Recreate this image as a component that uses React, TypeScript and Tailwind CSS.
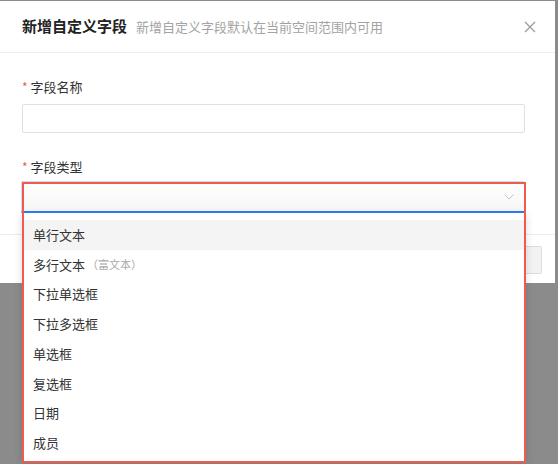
import React from 'react';

const options = ['单行文本', '多行文本', '下拉单选框', '下拉多选框', '单选框', '复选框', '日期', '成员'];

const Label: React.FC<{ text: string }> = ({ text }) => (
  <div className="flex items-center h-5 text-[13px] text-[#333]">
    <span className="text-[#f25a4e] mr-[3px] text-[12px] leading-none">*</span>
    {text}
  </div>
);

const App: React.FC = () => {
  return (
    <div
      className="relative w-[558px] h-[464px] overflow-hidden bg-[#8b8b8b]"
      style={{ fontFamily: '"Noto Sans CJK SC", "Noto Sans", sans-serif' }}
    >
      {/* Modal */}
      <div className="absolute left-0 top-px w-[555px] h-[282px] bg-white flex flex-col">
        {/* Header */}
        <div className="h-[52px] shrink-0 flex items-center pl-[22px] pr-[18px] border-b border-[#ededed]">
          <span className="text-[15px] font-bold text-[#222]">新增自定义字段</span>
          <span className="ml-[9px] text-[13px] text-[#a3a3a3]">新增自定义字段默认在当前空间范围内可用</span>
          <svg className="ml-auto mr-[1px]" width="12" height="12" viewBox="0 0 12 12">
            <path d="M1 1 L11 11 M11 1 L1 11" stroke="#9a9a9a" strokeWidth="1.2" fill="none" />
          </svg>
        </div>

        {/* Body */}
        <div className="pl-[22px] pr-[30px] pt-[24px]">
          <Label text="字段名称" />
          <div className="mt-[7px] h-[29px] border border-[#e0e0e0] rounded-[2px] bg-white" />
          <div className="mt-[24px]">
            <Label text="字段类型" />
          </div>
          <div className="mt-[4px] -ml-px h-[32px] border border-[#c9dbf8] border-b-2 border-b-[#2e7cf6] rounded-t-[2px] bg-gradient-to-b from-white to-[#f6f6f6] flex items-center justify-end pr-[10px]">
            <svg width="10" height="6" viewBox="0 0 10 6">
              <path d="M0.5 0.5 L5 5 L9.5 0.5" stroke="#c2c2c2" strokeWidth="1" fill="none" />
            </svg>
          </div>
        </div>

        {/* Footer */}
        <div className="mt-[21px] border-t border-[#ececec] flex-1 flex items-start justify-end pt-[11px] pr-[13px]">
          <button className="h-[28px] px-[18px] text-[13px] text-[#333] bg-[#f2f2f2] border border-[#dcdcdc] rounded-[2px]">
            取消
          </button>
        </div>
      </div>

      {/* Dropdown menu */}
      <div className="absolute left-[22px] top-[213px] w-[504px] h-[249px] bg-white shadow-[0_2px_8px_rgba(0,0,0,0.15)] pt-[7px]">
        {options.map((o, i) => (
          <div
            key={o}
            className={`h-[29.7px] flex items-center px-[11px] text-[13px] text-[#333] ${i === 0 ? 'bg-[#f4f4f4]' : ''}`}
          >
            {o}
            {i === 1 && <span className="ml-[2px] text-[11px] text-[#aaa]">（富文本）</span>}
          </div>
        ))}
      </div>

      {/* Highlight frame */}
      <div className="absolute left-[22px] top-[182px] w-[504px] h-[281px] border-2 border-[#f25a4e] pointer-events-none" />
    </div>
  );
};

export default App;
